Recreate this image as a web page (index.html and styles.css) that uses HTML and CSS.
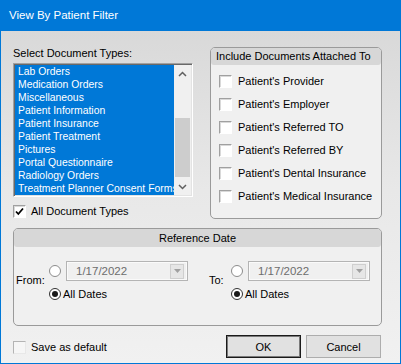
FILE: index.html
```html
<!DOCTYPE html>
<html lang="en">
<head>
    <meta charset="UTF-8">
    <title>View By Patient Filter</title>
    <link rel="stylesheet" href="styles.css">
</head>
<body>
    <div class="window">
        <div class="titlebar">View By Patient Filter</div>
        <div class="content">
            <div class="top-row">
                <div class="doc-types">
                    <div class="caption">Select Document Types:</div>
                    <div class="listbox">
                        <ul class="items">
                            <li>Lab Orders</li>
                            <li>Medication Orders</li>
                            <li>Miscellaneous</li>
                            <li>Patient Information</li>
                            <li>Patient Insurance</li>
                            <li>Patient Treatment</li>
                            <li>Pictures</li>
                            <li>Portal Questionnaire</li>
                            <li>Radiology Orders</li>
                            <li>Treatment Planner Consent Forms</li>
                        </ul>
                        <div class="scrollbar">
                            <div class="sb-btn">
                                <svg width="9" height="6" viewBox="0 0 9 6"><path d="M1 5 L4.5 1.5 L8 5" fill="none" stroke="#606060" stroke-width="1.5"/></svg>
                            </div>
                            <div class="sb-track"><div class="sb-thumb"></div></div>
                            <div class="sb-btn">
                                <svg width="9" height="6" viewBox="0 0 9 6"><path d="M1 1 L4.5 4.5 L8 1" fill="none" stroke="#606060" stroke-width="1.5"/></svg>
                            </div>
                        </div>
                    </div>
                    <div class="check all-types">
                        <span class="box">
                            <svg width="11" height="11" viewBox="0 0 11 11"><path d="M2 5.5 L4.3 8 L9 2.5" fill="none" stroke="#000" stroke-width="1.8"/></svg>
                        </span>
                        All Document Types
                    </div>
                </div>
                <div class="group attach">
                    <div class="group-head">Include Documents Attached To</div>
                    <div class="attach-body">
                        <div class="check row"><span class="box"></span>Patient's Provider</div>
                        <div class="check row"><span class="box"></span>Patient's Employer</div>
                        <div class="check row"><span class="box"></span>Patient's Referred TO</div>
                        <div class="check row"><span class="box"></span>Patient's Referred BY</div>
                        <div class="check row"><span class="box"></span>Patient's Dental Insurance</div>
                        <div class="check row"><span class="box"></span>Patient's Medical Insurance</div>
                    </div>
                </div>
            </div>

            <div class="group ref-date">
                <div class="group-head center">Reference Date</div>
                <div class="date-body">
                    <div class="date-field from">
                        <span class="field-label">From:</span>
                        <div class="field-options">
                            <div class="opt-row">
                                <span class="radio"></span>
                                <div class="combo">
                                    <span class="combo-text">1/17/2022</span>
                                    <span class="combo-btn">
                                        <svg width="7" height="4" viewBox="0 0 7 4"><path d="M0 0 L7 0 L3.5 4 Z" fill="#a0a0a0"/></svg>
                                    </span>
                                </div>
                            </div>
                            <div class="opt-row second">
                                <span class="radio checked"></span>All Dates
                            </div>
                        </div>
                    </div>
                    <div class="date-field to">
                        <span class="field-label">To:</span>
                        <div class="field-options">
                            <div class="opt-row">
                                <span class="radio"></span>
                                <div class="combo">
                                    <span class="combo-text">1/17/2022</span>
                                    <span class="combo-btn">
                                        <svg width="7" height="4" viewBox="0 0 7 4"><path d="M0 0 L7 0 L3.5 4 Z" fill="#a0a0a0"/></svg>
                                    </span>
                                </div>
                            </div>
                            <div class="opt-row second">
                                <span class="radio checked"></span>All Dates
                            </div>
                        </div>
                    </div>
                </div>
            </div>

            <div class="footer">
                <div class="check save-default"><span class="box light"></span>Save as default</div>
                <div class="buttons">
                    <button class="btn default">OK</button>
                    <button class="btn">Cancel</button>
                </div>
            </div>
        </div>
    </div>
</body>
</html>
```

FILE: styles.css
```css
body {
    margin: 0;
    font-family: "Liberation Sans", Arial, sans-serif;
    font-size: 11px;
    color: #000;
}
.window {
    width: 401px;
    height: 364px;
    box-sizing: border-box;
    border: 1px solid #0078d7;
    border-top: 0;
    background: linear-gradient(to bottom, #d6d6d6 0, #e8e8e8 190px, #f1f1f1 100%);
}
.titlebar {
    height: 31px;
    line-height: 31px;
    margin: 0 -1px;
    padding-left: 9px;
    background: #0078d7;
    color: #fff;
    font-size: 11.5px;
}
.content {
    padding: 16px 18px 0 12px;
}
.top-row {
    display: flex;
    align-items: flex-start;
    gap: 17px;
}

/* left column */
.doc-types {
    width: 180px;
}
.caption {
    line-height: 13px;
}
.listbox {
    margin-top: 3px;
    height: 134px;
    box-sizing: border-box;
    border: 1px solid;
    border-color: #a0a0a0 #fff #fff #a0a0a0;
    box-shadow: inset 1px 1px 0 #696969, inset -1px -1px 0 #e3e3e3;
    padding: 1px;
    display: flex;
}
.items {
    list-style: none;
    margin: 0;
    padding: 0;
    flex: 1;
    min-width: 0;
    background: #0078d7;
    color: #fff;
    font-size: 10.4px;
}
.items li {
    height: 13px;
    line-height: 13px;
    padding-left: 3px;
    white-space: nowrap;
    overflow: hidden;
}
.scrollbar {
    width: 17px;
    background: #f0f0f0;
    display: flex;
    flex-direction: column;
}
.sb-btn {
    height: 17px;
    display: flex;
    align-items: center;
    justify-content: center;
}
.sb-track {
    flex: 1;
    padding-top: 36px;
}
.sb-thumb {
    height: 59px;
    margin: 0 1px;
    background: #cdcdcd;
}

/* checkboxes */
.check {
    display: flex;
    align-items: center;
    line-height: 13px;
}
.box {
    width: 13px;
    height: 13px;
    box-sizing: border-box;
    border: 1px solid;
    border-color: #a0a0a0 #fff #fff #a0a0a0;
    box-shadow: inset 1px 1px 0 #d9d9d9;
    background: #fff;
    margin-right: 5px;
    display: flex;
    align-items: center;
    justify-content: center;
}
.box.light {
    border-color: #b4b4b4 #e8e8e8 #e8e8e8 #b4b4b4;
    box-shadow: none;
    background: #f6f6f6;
}
.all-types {
    margin-top: 8px;
}

/* group boxes */
.group {
    border: 1px solid #9a9a9a;
    border-radius: 5px;
    background: #f0f0f0;
}
.group-head {
    height: 17px;
    line-height: 17px;
    padding-left: 5px;
    background: #d7d7d7;
    border-radius: 4px 4px 3px 3px;
}
.group-head.center {
    height: 18px;
    line-height: 18px;
    padding-left: 0;
    text-align: center;
}
.attach {
    width: 172px;
    box-sizing: border-box;
}
.attach-body {
    padding: 5px 0 10px 8px;
}
.attach .row {
    height: 23px;
}
.attach .box {
    margin-right: 6px;
}

/* reference date */
.ref-date {
    margin-top: 9px;
}
.date-body {
    display: flex;
    gap: 21px;
    padding: 14px 0 24px 2px;
}
.date-field {
    display: flex;
    align-items: center;
}
.from .field-label {
    width: 33px;
}
.to .field-label {
    width: 22px;
}
.field-label {
    margin-top: -2px;
}
.opt-row {
    display: flex;
    align-items: center;
    height: 20px;
}
.opt-row.second {
    height: 14px;
    margin-top: 6px;
    line-height: 14px;
}
.radio {
    width: 12px;
    height: 12px;
    box-sizing: border-box;
    border: 1px solid #8c8c8c;
    border-radius: 50%;
    background: #fff;
    margin-right: 5px;
    display: flex;
    align-items: center;
    justify-content: center;
}
.opt-row.second .radio {
    margin-right: 2px;
}
.radio.checked {
    border-color: #333;
}
.radio.checked::after {
    content: "";
    width: 6px;
    height: 6px;
    border-radius: 50%;
    background: #1a1a1a;
}
.combo {
    width: 122px;
    height: 20px;
    box-sizing: border-box;
    border: 1px solid #b4b4b4;
    box-shadow: inset 0 0 0 1px #fafafa;
    background: #f0f0f0;
    display: flex;
    align-items: center;
    justify-content: space-between;
    padding: 0 3px 0 9px;
}
.combo-text {
    color: #6d6d6d;
    font-size: 11.5px;
}
.combo-btn {
    width: 14px;
    height: 15px;
    box-sizing: border-box;
    border: 1px solid #cfcfcf;
    background: #e6e6e6;
    display: flex;
    align-items: center;
    justify-content: center;
}

/* footer */
.footer {
    margin-top: 9px;
    margin-right: 1px;
    display: flex;
    align-items: center;
    justify-content: space-between;
}
.save-default {
    margin-top: 1px;
}
.buttons {
    display: flex;
    gap: 5px;
}
.btn {
    width: 75px;
    height: 23px;
    border: 1px solid #adadad;
    background: #e1e1e1;
    font-family: "Liberation Sans", Arial, sans-serif;
    font-size: 11px;
    color: #000;
    padding: 0;
}
.btn.default {
    border-color: #1a1a1a;
    box-shadow: inset 0 0 0 1px #7a7a7a;
}
```
